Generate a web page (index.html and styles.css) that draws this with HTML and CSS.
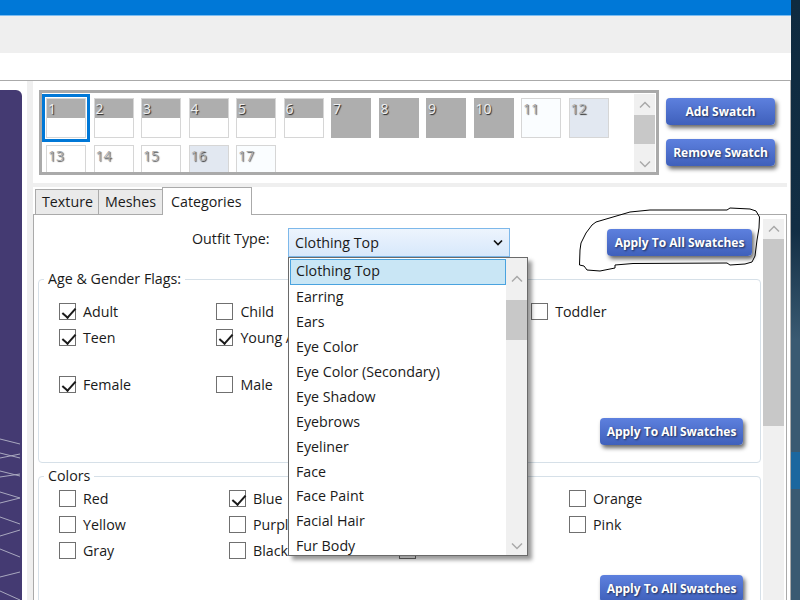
FILE: index.html
```html
<!DOCTYPE html>
<html lang="en">
<head>
<meta charset="utf-8">
<title>Outfit Categories</title>
<link rel="stylesheet" href="styles.css">
</head>
<body>
<div class="desktop">
  <div class="window">
    <div class="titlebar"></div>
    <div class="toolbar"></div>
    <div class="ribbon"></div>
    <div class="main">
      <aside class="viewport">
        <svg class="wires" width="22" height="180" viewBox="0 0 22 180">
          <path d="M0 19L20 24M0 33L20 38M0 38L20 34M0 51L20 56M0 57L20 54M0 72L20 78M0 83L20 78M0 97L20 104M0 116L20 110M0 129L20 137M0 157L20 152M0 171L20 180"/>
        </svg>
      </aside>
      <div class="gutter"></div>
      <div class="content">
        <div class="swatch-row">
          <div class="swatch-panel">
            <div class="swatch-grid">
              <div class="swatch half selected">1</div>
              <div class="swatch half">2</div>
              <div class="swatch half">3</div>
              <div class="swatch half">4</div>
              <div class="swatch half">5</div>
              <div class="swatch half">6</div>
              <div class="swatch full">7</div>
              <div class="swatch full">8</div>
              <div class="swatch full">9</div>
              <div class="swatch full">10</div>
              <div class="swatch pale">11</div>
              <div class="swatch tint">12</div>
              <div class="swatch plain">13</div>
              <div class="swatch plain">14</div>
              <div class="swatch plain">15</div>
              <div class="swatch tint">16</div>
              <div class="swatch pale">17</div>
            </div>
            <div class="scrollbar swatch-scroll">
              <div class="arrow"><svg width="12" height="8" viewBox="0 0 12 8"><path class="chev" d="M1 6.5L6 1.5L11 6.5"/></svg></div>
              <div class="thumb swatch-thumb"></div>
              <div class="arrow end"><svg width="12" height="8" viewBox="0 0 12 8"><path class="chev" d="M1 1.5L6 6.5L11 1.5"/></svg></div>
            </div>
          </div>
          <div class="swatch-actions">
            <button class="action" type="button">Add Swatch</button>
            <button class="action" type="button">Remove Swatch</button>
          </div>
        </div>
        <div class="divider"></div>
        <div class="tabs">
          <div class="tab">Texture</div>
          <div class="tab">Meshes</div>
          <div class="tab active">Categories</div>
        </div>
        <div class="tabpanel">
          <div class="pane">
            <div class="type-row">
              <span class="type-label">Outfit Type:</span>
              <div class="select">
                <span>Clothing Top</span>
                <svg width="10" height="7" viewBox="0 0 10 7"><path class="chev-dark" d="M1 1.5L5 5.5L9 1.5"/></svg>
              </div>
              <button class="action apply-top" type="button">Apply To All Swatches</button>
            </div>

            <fieldset class="group age">
              <legend>Age &amp; Gender Flags:</legend>
              <div class="check-grid age-grid">
                <label class="check"><span class="box on"></span>Adult</label>
                <label class="check"><span class="box"></span>Child</label>
                <label class="check"><span class="box"></span></label>
                <label class="check"><span class="box"></span>Toddler</label>
                <label class="check"><span class="box on"></span>Teen</label>
                <label class="check clip-a"><span class="box on"></span>Young A</label>
                <label class="check wide-gap"><span class="box on"></span>Female</label>
                <label class="check wide-gap"><span class="box"></span>Male</label>
              </div>
              <div class="group-foot"><button class="action" type="button">Apply To All Swatches</button></div>
            </fieldset>

            <fieldset class="group colors">
              <legend>Colors</legend>
              <div class="check-grid color-grid">
                <label class="check"><span class="box"></span>Red</label>
                <label class="check"><span class="box on"></span>Blue</label>
                <label class="check"><span class="box"></span></label>
                <label class="check"><span class="box"></span>Orange</label>
                <label class="check"><span class="box"></span>Yellow</label>
                <label class="check"><span class="box"></span>Purple</label>
                <label class="check"><span class="box"></span></label>
                <label class="check"><span class="box"></span>Pink</label>
                <label class="check"><span class="box"></span>Gray</label>
                <label class="check"><span class="box"></span>Black</label>
                <label class="check"><span class="box"></span></label>
              </div>
              <div class="group-foot colors-foot"><button class="action" type="button">Apply To All Swatches</button></div>
            </fieldset>
          </div>
          <div class="scrollbar pane-scroll">
            <div class="arrow"><svg width="12" height="8" viewBox="0 0 12 8"><path class="chev" d="M1 6.5L6 1.5L11 6.5"/></svg></div>
            <div class="thumb pane-thumb"></div>
          </div>
        </div>
      </div>
    </div>

    <div class="dropdown">
      <ul class="options">
        <li class="current">Clothing Top</li>
        <li>Earring</li>
        <li>Ears</li>
        <li>Eye Color</li>
        <li>Eye Color (Secondary)</li>
        <li>Eye Shadow</li>
        <li>Eyebrows</li>
        <li>Eyeliner</li>
        <li>Face</li>
        <li>Face Paint</li>
        <li>Facial Hair</li>
        <li>Fur Body</li>
      </ul>
      <div class="scrollbar drop-scroll">
        <div class="arrow tall"><svg width="12" height="8" viewBox="0 0 12 8"><path class="chev" d="M1 6.5L6 1.5L11 6.5"/></svg></div>
        <div class="thumb drop-thumb"></div>
        <div class="arrow end"><svg width="12" height="8" viewBox="0 0 12 8"><path class="chev" d="M1 1.5L6 6.5L11 1.5"/></svg></div>
      </div>
    </div>

    <svg class="scribble" width="800" height="600" viewBox="0 0 800 600">
      <path d="M584 266L579.5 265L580 250L581 243L586 233L592 225L596 222L613 217L630 212L650 210L727 210L730 208L750 209L756 211L759.500 217L759 228L757 240L755 256L752 262L745 264L730 265L727 263L633 263.500L615 265L615 268L600 271L587 270Z"/>
    </svg>
  </div>
</div>
</body>
</html>
```
FILE: styles.css
```css
* { box-sizing: border-box; }
html, body { margin: 0; padding: 0; }
body {
  width: 800px;
  height: 600px;
  overflow: hidden;
  font-family: "Open Sans", "Liberation Sans", sans-serif;
  font-size: 14.25px;
  color: #1a1a1a;
}
.desktop {
  width: 800px;
  height: 600px;
  background: linear-gradient(180deg, #0f2b40 0, #122e44 230px, #3a5a72 340px, #3a5a72 452px, #1b679f 452px, #1b679f 489px, #3a5a72 489px);
}
.window {
  position: relative;
  width: 791px;
  height: 600px;
  background: #fff;
  display: flex;
  flex-direction: column;
  overflow: hidden;
}
.titlebar { height: 16px; flex: none; background: #0078d7; border-bottom: 1px solid #7cbcf0; }
.toolbar { height: 37px; flex: none; background: #efefef; }
.ribbon { height: 27px; flex: none; background: #fff; }
.main {
  flex: 1;
  display: flex;
  min-height: 0;
  border-top: 1px solid #aaa;
  border-right: 1px solid #aaa;
}
.viewport {
  width: 22px;
  flex: none;
  margin-top: 9px;
  background: #443a72;
  border-radius: 0 6px 0 0;
  display: flex;
  flex-direction: column;
  justify-content: flex-end;
}
.wires { display: block; }
.wires path { stroke: #a9a8bf; stroke-width: 1; fill: none; }
.gutter { width: 6px; flex: none; margin-left: 5px; background: #efefef; }
.content { width: 754px; flex: none; display: flex; flex-direction: column; }

/* swatches */
.swatch-row { display: flex; padding: 9px 0 0 6px; flex: none; }
.swatch-panel {
  width: 620px;
  height: 85px;
  border: 3px solid #aaa;
  display: flex;
  background: #fff;
  overflow: hidden;
}
.swatch-grid {
  width: 592px;
  height: 79px;
  padding: 5px 0 0 4px;
  display: grid;
  grid-template-columns: repeat(12, 40px);
  grid-auto-rows: 40px;
  column-gap: 7.5px;
  row-gap: 7px;
  overflow: hidden;
}
.swatch {
  position: relative;
  border: 1px solid #d6d6d6;
  font-size: 14px;
  line-height: 17px;
  padding: 1px 0 0 1px;
  color: #f0f0f0;
  text-shadow: 1px 1px 1px #222;
}
.half { background: linear-gradient(180deg, #aeaeae 0 19px, #fff 19px); }
.full { background: #aeaeae; border-color: #aeaeae; }
.pale { background: #fafdff; color: #aaa; text-shadow: 1px 1px 1px #555; }
.tint { background: #e2e8f1; color: #b4b4b4; text-shadow: 1px 1px 1px #333; }
.plain { background: #fff; color: #aaa; text-shadow: 1px 1px 1px #555; }
.selected { box-shadow: 0 0 0 1px #fff, 0 0 0 4px #0078d7; z-index: 1; }

/* scrollbars */
.scrollbar { background: #f0f0f0; display: flex; flex-direction: column; flex: none; width: 21px; }
.arrow { height: 21px; flex: none; display: flex; align-items: center; justify-content: center; }
.arrow.end { margin-top: auto; height: 19px; }
.arrow.tall { height: 42px; }
.thumb { background: #c8c8c8; flex: none; }
.chev { fill: none; stroke: #a9a9a9; stroke-width: 1.5; }
.chev-dark { fill: none; stroke: #111; stroke-width: 1.7; }
.swatch-scroll { height: 79px; margin-top: 1px; }
.swatch-thumb { height: 29px; }
.pane-scroll { margin-top: 4px; height: 400px; }
.pane-scroll .arrow { height: 20px; }
.pane-thumb { height: 187px; }
.drop-scroll { height: 297px; }
.drop-thumb { height: 40px; }

/* buttons */
.action {
  display: block;
  height: 27px;
  width: 109px;
  border: 0;
  padding: 0;
  border-radius: 4px;
  background: linear-gradient(180deg, #5d80de 0, #3f60bb 100%);
  box-shadow: 2px 3px 4px rgba(0, 0, 0, .6);
  color: #fff;
  font-family: "Open Sans", "Liberation Sans", sans-serif;
  font-size: 12px;
  font-weight: 700;
  text-shadow: 1px 1px 2px rgba(0, 0, 0, .6);
  white-space: nowrap;
}
.swatch-actions { display: flex; flex-direction: column; gap: 14px; margin: 8px 0 0 7px; }

.divider { height: 4px; flex: none; margin: 8px 0 0 0; background: #efefef; }

/* tabs */
.tabs { display: flex; flex: none; padding: 0 0 0 2px; height: 27px; align-items: flex-end; position: relative; z-index: 1; }
.tab {
  height: 25px;
  padding: 0 6px;
  background: #eaeaea;
  border: 1px solid #aaa;
  border-bottom: 0;
  line-height: 24px;
  margin-left: -1px;
}
.tab:first-child { margin-left: 0; width: 64px; padding-left: 6px; }
.tab:nth-child(2) { width: 65px; }
.tab.active { height: 28px; background: #fff; width: 90px; padding: 0 8px; line-height: 27px; margin-bottom: -1px; }

.tabpanel {
  flex: 1;
  min-height: 0;
  display: flex;
  border: 1px solid #aaa;
  border-bottom: 0;
  overflow: hidden;
}
.pane { width: 729px; flex: none; }

.type-row { display: flex; align-items: flex-start; padding: 13px 0 0 158px; height: 42px; }
.type-label { width: 96px; line-height: 21px; flex: none; }
.select {
  width: 222px;
  height: 29px;
  flex: none;
  border: 1px solid #7db8ea;
  background: linear-gradient(180deg, #edf4fd, #d7e8fb);
  display: flex;
  align-items: center;
  justify-content: space-between;
  padding: 0 6px;
}
.apply-top { width: 145px; margin: 1px 0 0 97px; }

/* groups */
.group {
  margin: 12px 2px 0 4px;
  padding: 0 0 0 20px;
  border: 1px solid #d6e0e8;
  border-radius: 4px;
  min-width: 0;
}
.group legend { padding: 0 4px; margin-left: -15px; line-height: 20px; }
.age { height: 194px; position: relative; }
.colors { margin-top: 3px; height: 200px; }
.check-grid { display: grid; justify-items: start; }
.age-grid { grid-template-columns: repeat(4, 157.4px); grid-auto-rows: 26px; padding-top: 9px; }
.wide-gap { margin-top: 21px; grid-row: 3; }
.color-grid { grid-template-columns: repeat(4, 170px); grid-template-rows: 26px 26.500px 27px; margin-top: -1px; }
.check { display: flex; align-items: center; gap: 7px; height: 26px; white-space: nowrap; }
.box {
  width: 17px;
  height: 17px;
  flex: none;
  border: 1px solid #707070;
  background: #fff;
  position: relative;
}
.box.on::after {
  content: "";
  position: absolute;
  left: 5px;
  top: 1px;
  width: 6px;
  height: 11px;
  border: solid #1a1a1a;
  border-width: 0 2px 2px 0;
  transform: rotate(42deg);
}
.group-foot { display: flex; justify-content: flex-end; padding-right: 17px; }
.group-foot .action { width: 143px; }
.age .group-foot { position: absolute; right: 0; bottom: 17px; }
.colors-foot { margin-top: 10px; }

/* dropdown overlay */
.dropdown {
  position: absolute;
  left: 288px;
  top: 257px;
  width: 240px;
  height: 299px;
  background: #fff;
  border: 1px solid #6a6a6a;
  box-shadow: 4px 4px 4px rgba(0, 0, 0, .4);
  display: flex;
  z-index: 3;
}
.options { list-style: none; margin: 0; padding: 1.300px 0 0 1px; width: 217px; flex: none; }
.options li { height: 24.92px; line-height: 24px; padding-left: 6px; }
.options li.current { height: 25.900px; background: #c9e6f5; border: 1px solid #4aa3df; padding-left: 5px; line-height: 22px; width: 216px; background-clip: padding-box; }

.scribble { position: absolute; left: 0; top: 0; z-index: 4; pointer-events: none; }
.scribble path { fill: none; stroke: #000; stroke-width: 1; }
```
